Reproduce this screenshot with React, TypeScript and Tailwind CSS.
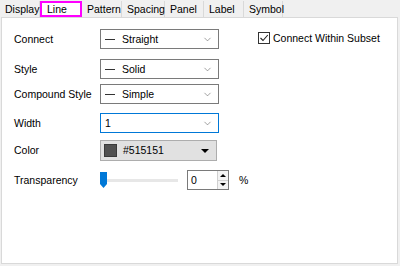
import { ChevronDown } from "lucide-react";

const font = { fontFamily: '"Liberation Sans", Arial, sans-serif' };

const tabs = [
  { name: "Display", w: "w-[40px]" },
  { name: "Line", w: "w-[42px]" },
  { name: "Pattern", w: "w-[40px]" },
  { name: "Spacing", w: "w-[43px]" },
  { name: "Panel", w: "w-[39px]" },
  { name: "Label", w: "w-[40px]" },
  { name: "Symbol", w: "w-[39px]" },
];

const Combo = ({ text, line, blue }: { text: string; line?: boolean; blue?: boolean }) => (
  <div
    className={`flex items-center w-[119px] h-[20px] bg-white border ${
      blue ? "border-[#0078d7]" : "border-[#7a7a7a]"
    } pl-[4px] pr-[5px]`}
  >
    {line && <div className="w-[10px] h-[1px] bg-[#333] mr-[7px]"></div>}
    <span className="flex-1 text-[10.5px] leading-none text-black whitespace-nowrap">{text}</span>
    <ChevronDown size={11} strokeWidth={1.2} className="text-[#555]" />
  </div>
);

const Label = ({ children }: { children: string }) => (
  <div className="w-[86px] text-[10.5px] text-black leading-none whitespace-nowrap">{children}</div>
);

export default function App() {
  return (
    <div className="w-[400px] h-[266px] bg-[#f0f0f0] flex flex-col" style={font}>
      {/* tab strip */}
      <div className="flex h-[17px] pt-[1px]">
        {tabs.map((t) =>
          t.name === "Line" ? (
            <div
              key={t.name}
              className={`${t.w} h-[16px] bg-white border-2 border-[#ff00ff] text-[10.5px] leading-none flex items-center pl-[5px] text-black whitespace-nowrap`}
            >
              {t.name}
            </div>
          ) : (
            <div
              key={t.name}
              className={`${t.w} h-[16px] bg-[#f0f0f0] border-r border-[#d9d9d9] text-[10.5px] leading-none flex items-center pl-[5px] text-black whitespace-nowrap`}
            >
              {t.name}
            </div>
          )
        )}
      </div>

      {/* panel */}
      <div className="ml-[1px] w-[397px] h-[247px] bg-white border border-[#d9d9d9] flex pl-[12px] pt-[11px]">
        <div className="flex flex-col w-[244px]">
          <div className="flex items-center h-[20px]">
            <Label>Connect</Label>
            <Combo text="Straight" line />
          </div>
          <div className="flex items-center h-[20px] mt-[10px]">
            <Label>Style</Label>
            <Combo text="Solid" line />
          </div>
          <div className="flex items-center h-[20px] mt-[5px]">
            <Label>Compound Style</Label>
            <Combo text="Simple" line />
          </div>
          <div className="flex items-center h-[20px] mt-[9px]">
            <Label>Width</Label>
            <Combo text="1" blue />
          </div>
          <div className="flex items-center h-[21px] mt-[7px]">
            <Label>Color</Label>
            <div className="flex items-center w-[117px] h-[21px] bg-[#e1e1e1] border border-[#adadad] pl-[3px] pr-[7px]">
              <div className="w-[13px] h-[13px] bg-[#515151] border border-[#3a3a3a] mr-[6px]"></div>
              <span className="flex-1 text-[10.5px] leading-none text-black">#515151</span>
              <div className="w-0 h-0 border-l-[4px] border-r-[4px] border-t-[4px] border-l-transparent border-r-transparent border-t-black"></div>
            </div>
          </div>
          <div className="flex items-center h-[20px] mt-[9px]">
            <Label>Transparency</Label>
            <div className="relative w-[78px] h-[20px] flex items-center">
              <div className="w-full h-[3px] bg-[#e7e7e7]"></div>
              <svg className="absolute left-0 top-[2px]" width="7" height="16" viewBox="0 0 7 16">
                <path d="M0 0 H7 V12 L3.5 16 L0 12 Z" fill="#0078d7" />
              </svg>
            </div>
            <div className="ml-[9px] flex w-[42px] h-[20px] border border-[#7a7a7a] bg-white">
              <span className="flex-1 text-[10.5px] leading-none pl-[3px] pt-[4px] text-black">0</span>
              <div className="flex flex-col w-[11px] border-l border-[#d0d0d0]">
                <div className="flex-1 flex items-center justify-center bg-[#f3f3f3] border-b border-[#d0d0d0]">
                  <div className="w-0 h-0 border-l-[3px] border-r-[3px] border-b-[3px] border-l-transparent border-r-transparent border-b-black"></div>
                </div>
                <div className="flex-1 flex items-center justify-center bg-[#f3f3f3]">
                  <div className="w-0 h-0 border-l-[3px] border-r-[3px] border-t-[3px] border-l-transparent border-r-transparent border-t-black"></div>
                </div>
              </div>
            </div>
            <span className="ml-[10px] text-[10.5px] leading-none text-black">%</span>
          </div>
        </div>

        <div className="flex items-start pt-[3px]">
          <div className="flex items-center">
            <div className="w-[12px] h-[12px] border border-[#333] bg-white flex items-center justify-center">
              <svg width="10" height="10" viewBox="0 0 10 10">
                <path d="M1.5 5 L4 7.5 L8.8 2" fill="none" stroke="#222" strokeWidth="1.1" />
              </svg>
            </div>
            <span className="ml-[3px] text-[10.5px] leading-none text-black whitespace-nowrap">Connect Within Subset</span>
          </div>
        </div>
      </div>
    </div>
  );
}
